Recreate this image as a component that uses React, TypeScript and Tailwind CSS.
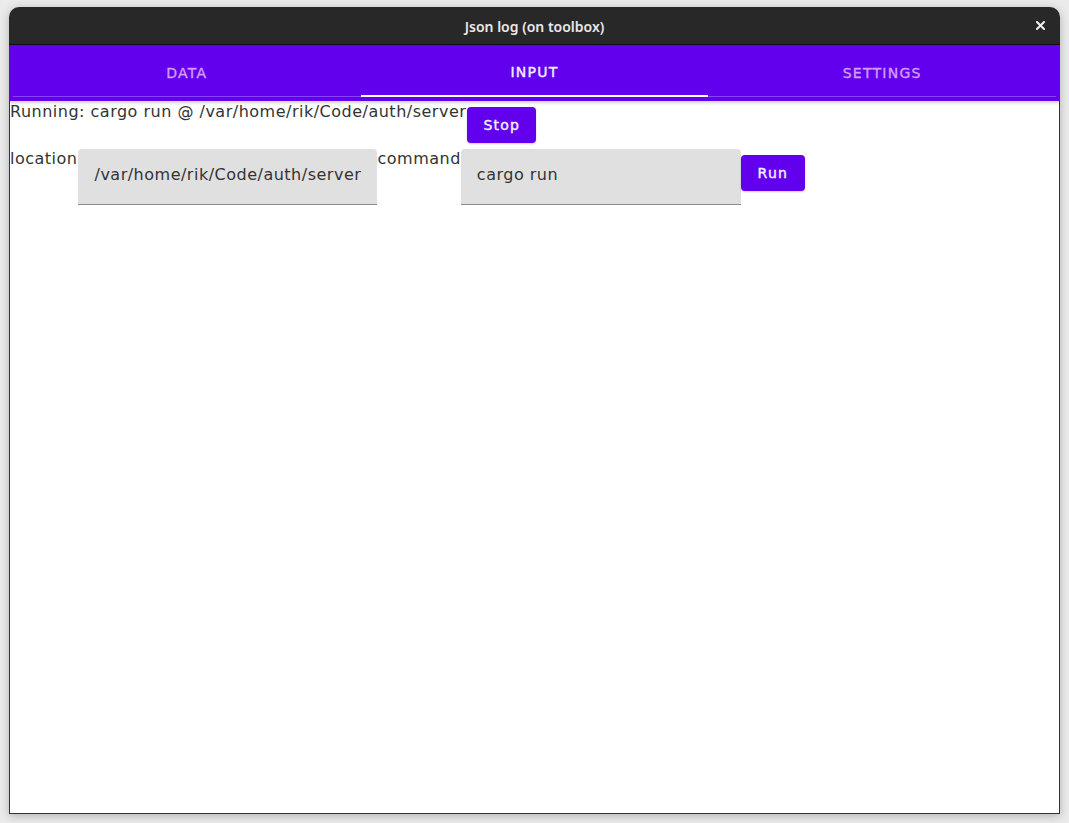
const tabs = ["DATA", "INPUT", "SETTINGS"];

function Field({ value, width }: { value: string; width: string }) {
    return (
        <div className={`${width} h-[56px] shrink-0 flex items-center px-4 pb-[3px] bg-[#e0e0e0] rounded-t-[4px] border-b border-[#8c8c8c] text-[16px] tracking-[0.5px] text-[#333]`}>
            {value}
        </div>
    );
}

function PurpleButton({ label, width }: { label: string; width: string }) {
    return (
        <button className={`${width} h-[36px] my-[6px] shrink-0 rounded-[4px] bg-[#6200ee] text-[#f4f0ff] text-[14px] font-medium tracking-[1.25px] [-webkit-text-stroke:0.4px_#f4f0ff] shadow-[0_1px_2px_rgba(0,0,0,0.2)]`}>
            {label}
        </button>
    );
}

export default function App() {
    return (
        <div className="w-[1069px] h-[823px] bg-[#ebebeb] pt-[7px] pl-[9px] font-['DejaVu_Sans',sans-serif]">
            <div className="w-[1051px] h-[807px] flex flex-col rounded-t-[10px] overflow-hidden shadow-[0_2px_10px_rgba(0,0,0,0.25)]">
                {/* Title bar */}
                <div className="h-[38px] shrink-0 bg-[#282828] border-b border-[#111] flex items-center relative">
                    <span className="flex-1 text-center pt-[1px] text-[14px] font-semibold text-[#e8e8e8] font-['Noto_Sans',sans-serif]">
                        Json log (on toolbox)
                    </span>
                    <svg className="absolute right-[15px] top-[14px]" width="9" height="9" viewBox="0 0 9 9">
                        <path d="M1 1 L8 8 M8 1 L1 8" stroke="#f0f0f0" strokeWidth="2" strokeLinecap="square" />
                    </svg>
                </div>

                {/* Tabs */}
                <div className="h-[56px] shrink-0 bg-[#6200ee] px-[4px] shadow-[0_2px_3px_rgba(0,0,0,0.18)] relative z-10">
                    <div className="h-[52px] flex border-b border-[#8a44ff]">
                        {tabs.map((t) => (
                            <div
                                key={t}
                                className={`flex-1 flex items-center justify-center pt-[5px] text-[14px] font-medium tracking-[1.25px] ${t === "INPUT" ? "text-[#f4eeff] [-webkit-text-stroke:0.4px_#f4eeff] border-b-2 border-white -mb-[1px]" : "text-[#d29cf6] [-webkit-text-stroke:0.4px_#d29cf6]"}`}
                            >
                                {t}
                            </div>
                        ))}
                    </div>
                </div>

                {/* Content */}
                <div className="flex-1 bg-white border-x border-b border-[#333] text-[16px] tracking-[0.5px] text-[#333]">
                    <div className="flex items-start">
                        <span className="leading-[19px] pt-[1px] pr-[1px]">Running: cargo run @ /var/home/rik/Code/auth/server</span>
                        <PurpleButton label="Stop" width="w-[69px]" />
                    </div>
                    <div className="flex items-start">
                        <span className="leading-[19px] pr-[1px]">location</span>
                        <Field value="/var/home/rik/Code/auth/server" width="w-[299px]" />
                        <span className="leading-[19px]">command</span>
                        <Field value="cargo run" width="w-[280px]" />
                        <PurpleButton label="Run" width="w-[64px]" />
                    </div>
                </div>
            </div>
        </div>
    );
}
